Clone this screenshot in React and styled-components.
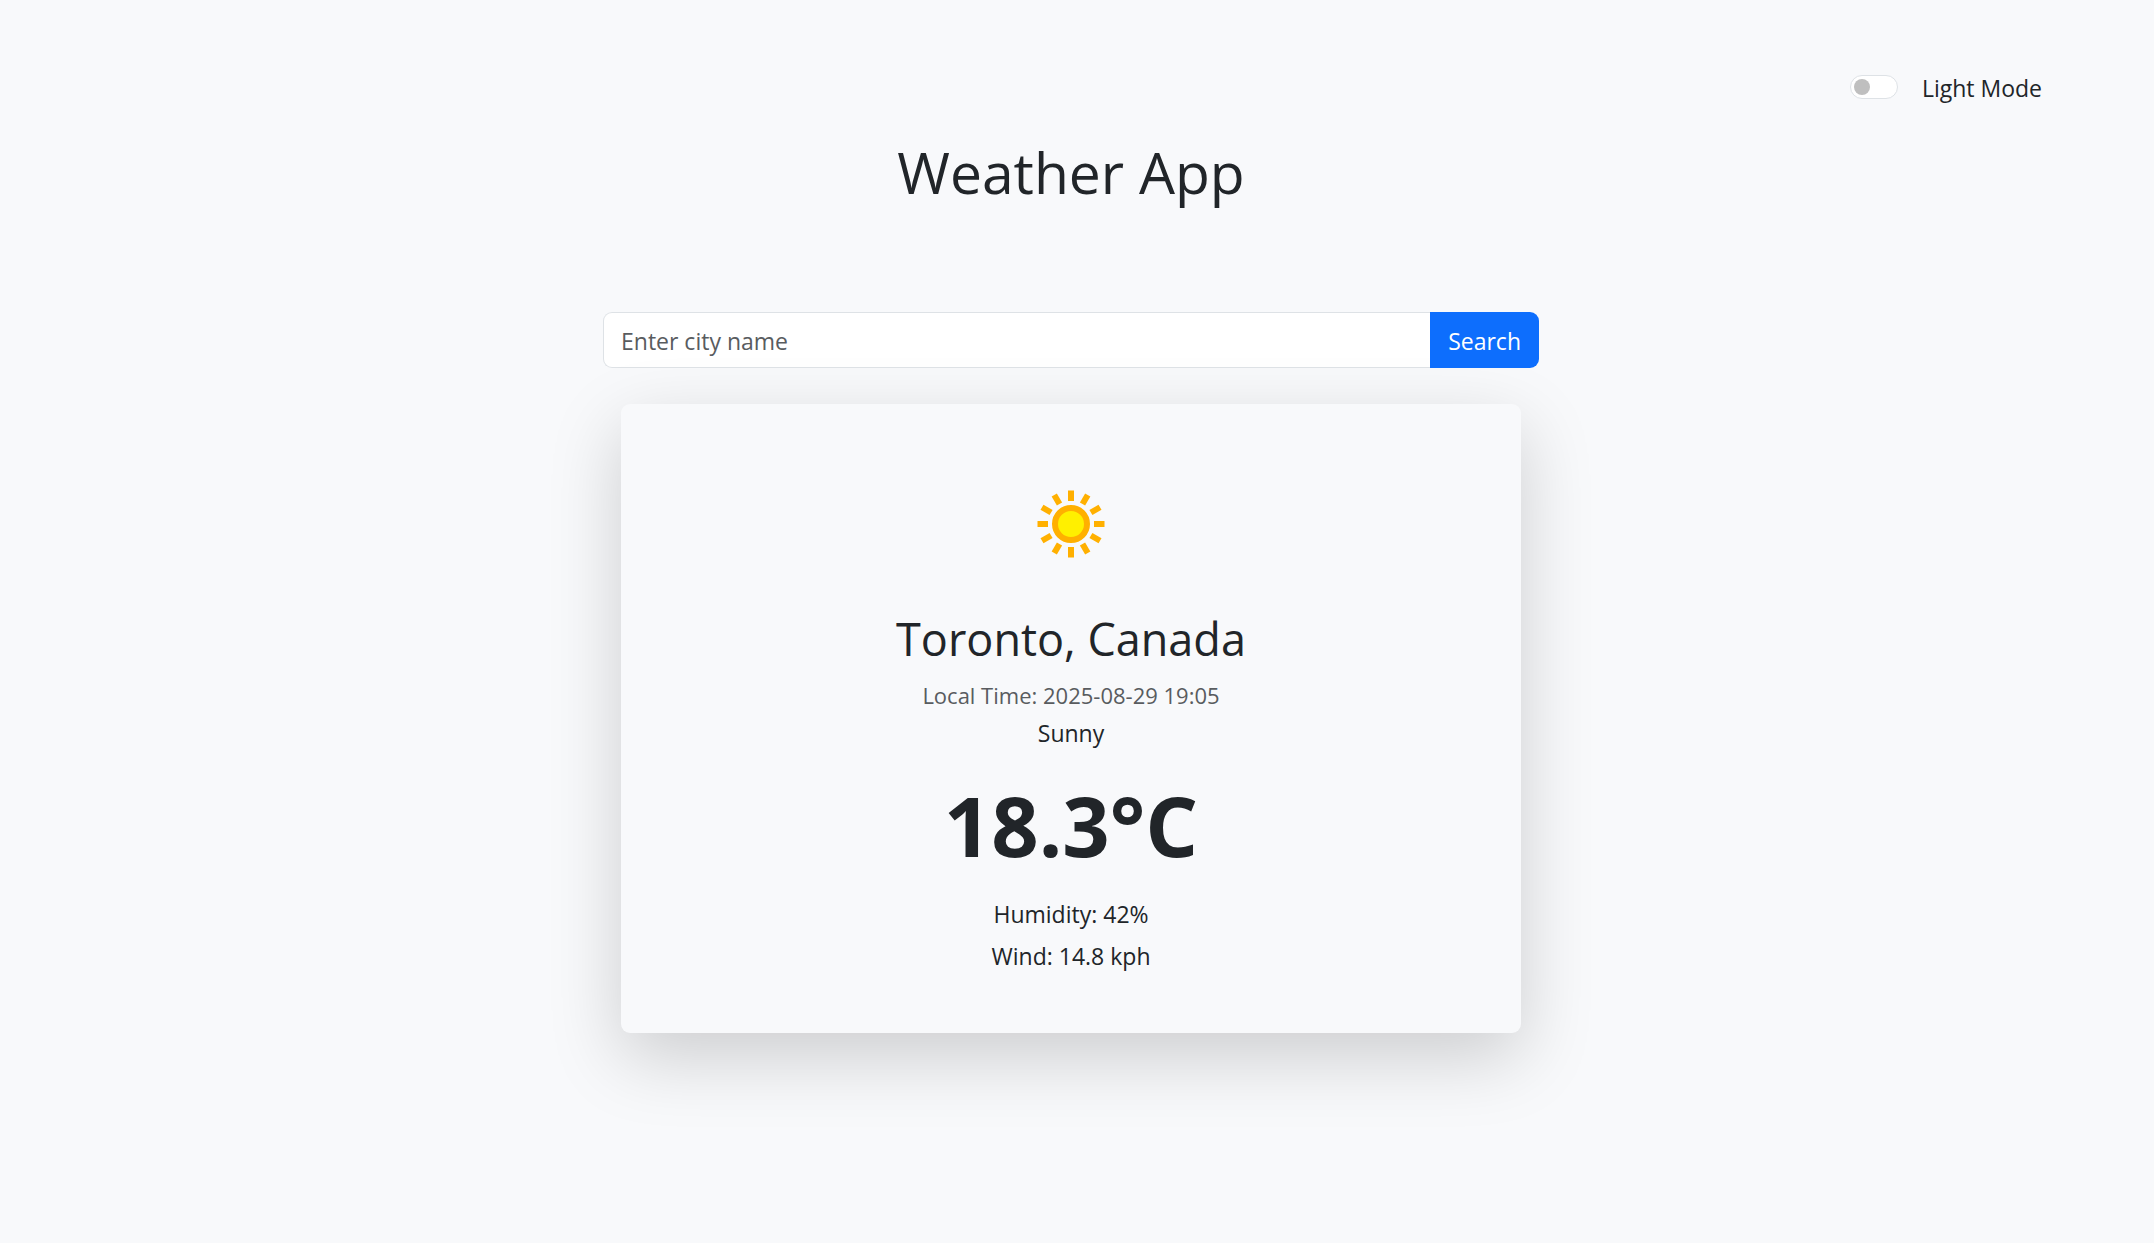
import React, { useState } from 'react';
import styled, { createGlobalStyle } from 'styled-components';

const GlobalStyle = createGlobalStyle`
  *, *::before, *::after { box-sizing: border-box; }
  body {
    margin: 0;
    background: ${(p) => (p.$dark ? '#212529' : '#f8f9fb')};
    color: ${(p) => (p.$dark ? '#f8f9fa' : '#212529')};
    font-family: "Segoe UI", "Open Sans", "Noto Sans", sans-serif;
    font-size: 23px;
    line-height: 36px;
  }
`;

const Page = styled.main`
  display: flex;
  flex-direction: column;
  align-items: center;
  min-height: 100vh;
  padding: 70px 12px 72px 0;
`;

const ModeSwitch = styled.label`
  align-self: flex-end;
  display: flex;
  align-items: center;
  gap: 24px;
  margin-right: 100px;
`;

const Toggle = styled.input`
  appearance: none;
  width: 48px;
  height: 24px;
  margin: 0 0 2px;
  border: 1px solid #dee2e6;
  border-radius: 24px;
  background: #fff;
  display: flex;
  align-items: center;
  padding: 0 3px;

  &::before {
    content: '';
    width: 16px;
    height: 16px;
    border-radius: 50%;
    background: #bfbfbf;
  }

  &:checked {
    justify-content: flex-end;
    background: #0d6efd;
  }
`;

const Title = styled.h1`
  margin: 30px 0 104px;
  font-size: 57px;
  line-height: 72px;
  font-weight: 400;
`;

const SearchForm = styled.form`
  display: flex;
  width: 100%;
  max-width: 936px;
`;

const CityInput = styled.input`
  flex: 1;
  min-width: 0;
  height: 56px;
  padding: 2px 17px 0;
  border: 1px solid #dee2e6;
  border-right: 0;
  border-radius: 9px 0 0 9px;
  background: #fff;
  color: #212529;
  font: inherit;

  &::placeholder { color: #595c5f; opacity: 1; }
`;

const SearchButton = styled.button`
  position: relative;
  z-index: 2;
  padding: 2px 18px 0;
  border: 0;
  border-radius: 0 9px 9px 0;
  background: #0d6efd;
  color: #fff;
  font: inherit;
`;

const Card = styled.section`
  position: relative;
  display: flex;
  flex-direction: column;
  align-items: center;
  width: 100%;
  max-width: 900px;
  margin-top: 36px;
  padding: 72px 24px 59px;
  border-radius: 9px;
  background: ${(p) => (p.$dark ? '#2b3035' : '#f8f9fb')};
  box-shadow: 0 24px 72px rgba(0, 0, 0, 0.175);
  text-align: center;
`;

const SunIcon = styled.svg`
  width: 96px;
  height: 96px;
`;

const Place = styled.h2`
  margin: 39px 0 10px;
  font-size: 45px;
  line-height: 56px;
  font-weight: 400;
`;

const Line = styled.p`
  margin: 0 0 ${(p) => p.$gap || 0}px;
  color: ${(p) => (p.$muted ? '#595c5f' : 'inherit')};
  font-size: ${(p) => (p.$muted ? 22 : 23)}px;
`;

const Temperature = styled.p`
  margin: 24px 0 21px;
  font-size: 83px;
  line-height: 100px;
  font-weight: 700;
`;

const RAYS = Array.from({ length: 12 }, (_, i) => i * 30);

function Sun() {
  return (
    <SunIcon viewBox="0 0 96 96" role="img" aria-label="Sunny">
      <circle cx="48" cy="48" r="16" fill="#fff000" stroke="#ffb000" strokeWidth="6" />
      {RAYS.map((angle) => (
        <rect
          key={angle}
          x="45"
          y="14.5"
          width="6"
          height="10.5"
          fill="#ffb000"
          transform={`rotate(${angle} 48 48)`}
        />
      ))}
    </SunIcon>
  );
}

export default function App() {
  const [dark, setDark] = useState(false);
  const [city, setCity] = useState('');

  return (
    <>
      <GlobalStyle $dark={dark} />
      <Page>
        <ModeSwitch>
          <Toggle
            type="checkbox"
            role="switch"
            checked={dark}
            onChange={(e) => setDark(e.target.checked)}
          />
          {dark ? 'Dark Mode' : 'Light Mode'}
        </ModeSwitch>
        <Title>Weather App</Title>
        <SearchForm onSubmit={(e) => e.preventDefault()}>
          <CityInput
            type="text"
            aria-label="City name"
            placeholder="Enter city name"
            value={city}
            onChange={(e) => setCity(e.target.value)}
          />
          <SearchButton type="submit">Search</SearchButton>
        </SearchForm>
        <Card $dark={dark}>
          <Sun />
          <Place>Toronto, Canada</Place>
          <Line $muted $gap={2}>Local Time: 2025-08-29 19:05</Line>
          <Line>Sunny</Line>
          <Temperature>18.3°C</Temperature>
          <Line $gap={6}>Humidity: 42%</Line>
          <Line>Wind: 14.8 kph</Line>
        </Card>
      </Page>
    </>
  );
}
